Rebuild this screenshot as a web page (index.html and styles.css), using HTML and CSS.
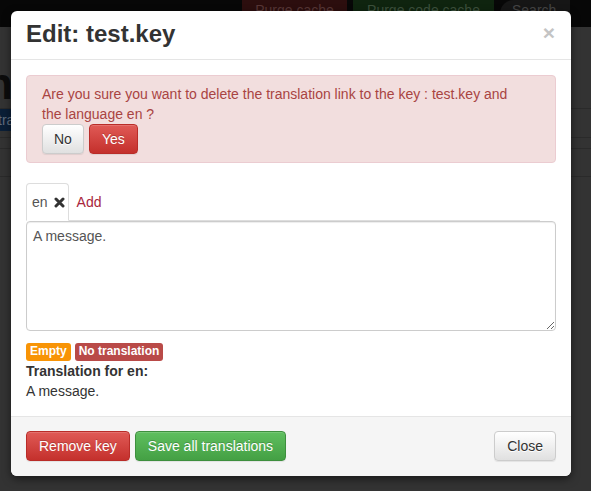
FILE: index.html
```html
<!DOCTYPE html>
<html lang="en">
<head>
<meta charset="utf-8">
<title>Edit: test.key</title>
<link rel="stylesheet" href="styles.css">
</head>
<body>
<div class="navbar">
  <div class="nav-actions">
    <span class="nb-btn nb-red">Purge cache</span>
    <span class="nb-btn nb-green">Purge code cache</span>
    <span class="nb-search">Search</span>
  </div>
</div>
<div class="page">
  <h1 class="page-title">na</h1>
  <div class="bg-table">
    <div class="bg-row r1"><span class="bg-btn">translations</span></div>
    <div class="bg-row r2"></div>
    <div class="bg-row r3"></div>
  </div>
</div>

<div class="modal">
  <div class="modal-header">
    <h3 class="modal-title">Edit: test.key</h3>
    <span class="close">&times;</span>
  </div>
  <div class="modal-body">
    <div class="alert">
      <p class="alert-text">Are you sure you want to delete the translation link to the key : test.key and the language en ?</p>
      <div class="alert-actions">
        <button class="btn btn-default btn-no">No</button>
        <button class="btn btn-danger">Yes</button>
      </div>
    </div>
    <div class="nav-tabs">
      <span class="tab active">en
        <svg class="tab-x" width="11" height="11" viewBox="0 0 11 11"><path d="M2 2 L9 9 M9 2 L2 9" stroke="#333" stroke-width="3" stroke-linecap="round"/></svg>
      </span>
      <span class="tab-link">Add</span>
    </div>
    <textarea class="editor">A message.</textarea>
    <div class="labels">
      <span class="label label-warning">Empty</span>
      <span class="label label-important">No translation</span>
    </div>
    <strong class="for-title">Translation for en:</strong>
    <div class="for-text">A message.</div>
  </div>
  <div class="modal-footer">
    <div class="footer-left">
      <button class="btn btn-danger">Remove key</button>
      <button class="btn btn-success">Save all translations</button>
    </div>
    <button class="btn btn-default">Close</button>
  </div>
</div>
</body>
</html>
```

FILE: styles.css
```css
html, body {
  margin: 0;
  padding: 0;
}
body {
  background: #333333;
  font-family: "Liberation Sans", Arial, sans-serif;
  font-size: 14px;
  line-height: 20px;
  color: #333;
  width: 591px;
  height: 491px;
  overflow: hidden;
}

/* background page (dimmed) */
.navbar {
  height: 27px;
  background: #070707;
  display: flex;
  justify-content: flex-end;
  padding-right: 21px;
  overflow: hidden;
}
.nav-actions {
  display: flex;
  gap: 6px;
  align-items: flex-start;
}
.nb-btn, .nb-search {
  height: 27px;
  box-sizing: border-box;
  line-height: 20px;
  text-align: center;
  font-size: 14px;
}
.nb-red { width: 105px; background: #2c0e0e; color: #573636; }
.nb-green { width: 141px; background: #0f240f; color: #3c503c; }
.nb-search {
  width: 70px;
  background: #161616;
  color: #454545;
  border-radius: 14px 0 0 14px;
  text-align: left;
  padding-left: 12px;
}
.page {
  overflow: hidden;
}
.page-title {
  margin: 33px 0 0 -14px;
  font-size: 44px;
  line-height: 48px;
  font-weight: bold;
  color: #0c0c0c;
}
.bg-row {
  border-top: 1px solid #2a2a2a;
  box-sizing: border-box;
}
.r1 { height: 29px; }
.r2 { height: 11px; }
.r3 { height: 29px; border-bottom: 1px solid #2a2a2a; }
.bg-btn {
  display: inline-block;
  height: 22px;
  line-height: 22px;
  background: #0b1f37;
  color: #5f6d7e;
  padding: 0 6px 0 0;
  margin-left: -2px;
  vertical-align: top;
}

/* modal */
.modal {
  position: absolute;
  top: 11px;
  left: 11px;
  width: 560px;
  background: #fff;
  border-radius: 6px;
  box-shadow: 0 3px 9px rgba(0, 0, 0, 0.5);
}
.modal-header {
  display: flex;
  justify-content: space-between;
  align-items: center;
  padding: 9px 15px 12px;
  border-bottom: 1px solid #e5e5e5;
}
.modal-title {
  margin: 0;
  font-size: 24px;
  line-height: 27px;
  font-weight: bold;
  color: #333;
}
.close {
  font-size: 21px;
  font-weight: bold;
  line-height: 20px;
  color: #c4c4c4;
  margin-right: 1px;
  margin-top: -2px;
}
.modal-body {
  padding: 15px;
}
.alert {
  background: #f2dede;
  border: 1px solid #ebccd1;
  border-radius: 4px;
  color: #a94442;
  padding: 8px 35px 8px 15px;
  margin-bottom: 20px;
}
.alert-text {
  margin: 0;
}
.alert-actions {
  display: flex;
  gap: 5px;
}
.btn {
  font-family: inherit;
  font-size: 14px;
  line-height: 20px;
  padding: 4px 12px;
  border-radius: 4px;
  border: 1px solid transparent;
  cursor: pointer;
  margin: 0;
}
.btn-no {
  padding: 4px 11px;
}
.btn-default {
  color: #333;
  background: linear-gradient(to bottom, #ffffff 0%, #e0e0e0 100%);
  border-color: #ccc;
  text-shadow: 0 1px 0 #fff;
  box-shadow: inset 0 1px 0 rgba(255,255,255,.15), 0 1px 1px rgba(0,0,0,.075);
}
.btn-danger {
  color: #fff;
  background: linear-gradient(to bottom, #e05a56 0%, #c4302c 100%);
  border-color: #b92c28;
  text-shadow: 0 -1px 0 rgba(0,0,0,.2);
  box-shadow: inset 0 1px 0 rgba(255,255,255,.15), 0 1px 1px rgba(0,0,0,.075);
}
.btn-success {
  color: #fff;
  background: linear-gradient(to bottom, #5fbf5f 0%, #44a044 100%);
  border-color: #3e8f3e;
  text-shadow: 0 -1px 0 rgba(0,0,0,.2);
  box-shadow: inset 0 1px 0 rgba(255,255,255,.15), 0 1px 1px rgba(0,0,0,.075);
}

.nav-tabs {
  display: flex;
  align-items: flex-end;
  border-bottom: 1px solid #ddd;
  height: 37px;
  margin-right: 16px;
}
.tab {
  display: flex;
  align-items: center;
  gap: 6px;
  height: 38px;
  box-sizing: border-box;
  padding: 8px 3px 8px 5px;
  border: 1px solid #ddd;
  border-bottom-color: transparent;
  border-radius: 4px 4px 0 0;
  background: #fff;
  margin-bottom: -1px;
  color: #555;
}
.tab-x {
  display: block;
}
.tab-link {
  color: #a8263d;
  padding: 0 0 8px 8px;
  line-height: 20px;
}
.editor {
  display: block;
  width: 100%;
  height: 110px;
  box-sizing: border-box;
  margin: 0;
  padding: 4px 6px;
  border: 1px solid #ccc;
  border-radius: 4px;
  font-family: inherit;
  font-size: 14px;
  line-height: 20px;
  color: #555;
  box-shadow: inset 0 1px 1px rgba(0,0,0,.075);
}
.labels {
  margin-top: 12px;
  display: flex;
  gap: 4px;
  height: 18px;
}
.label {
  display: inline-block;
  font-size: 12px;
  font-weight: bold;
  line-height: 13px;
  padding: 2px 4px 3px;
  color: #fff;
  border-radius: 3px;
}
.label-warning { background: #f89406; }
.label-important { background: #b94a48; }
.for-title {
  display: block;
  font-weight: bold;
}
.for-text {
  color: #333;
}
.modal-footer {
  display: flex;
  justify-content: space-between;
  align-items: center;
  padding: 14px 15px 15px;
  border-top: 1px solid #e5e5e5;
  background: #f5f5f5;
  border-radius: 0 0 6px 6px;
}
.footer-left {
  display: flex;
  gap: 5px;
}
```
